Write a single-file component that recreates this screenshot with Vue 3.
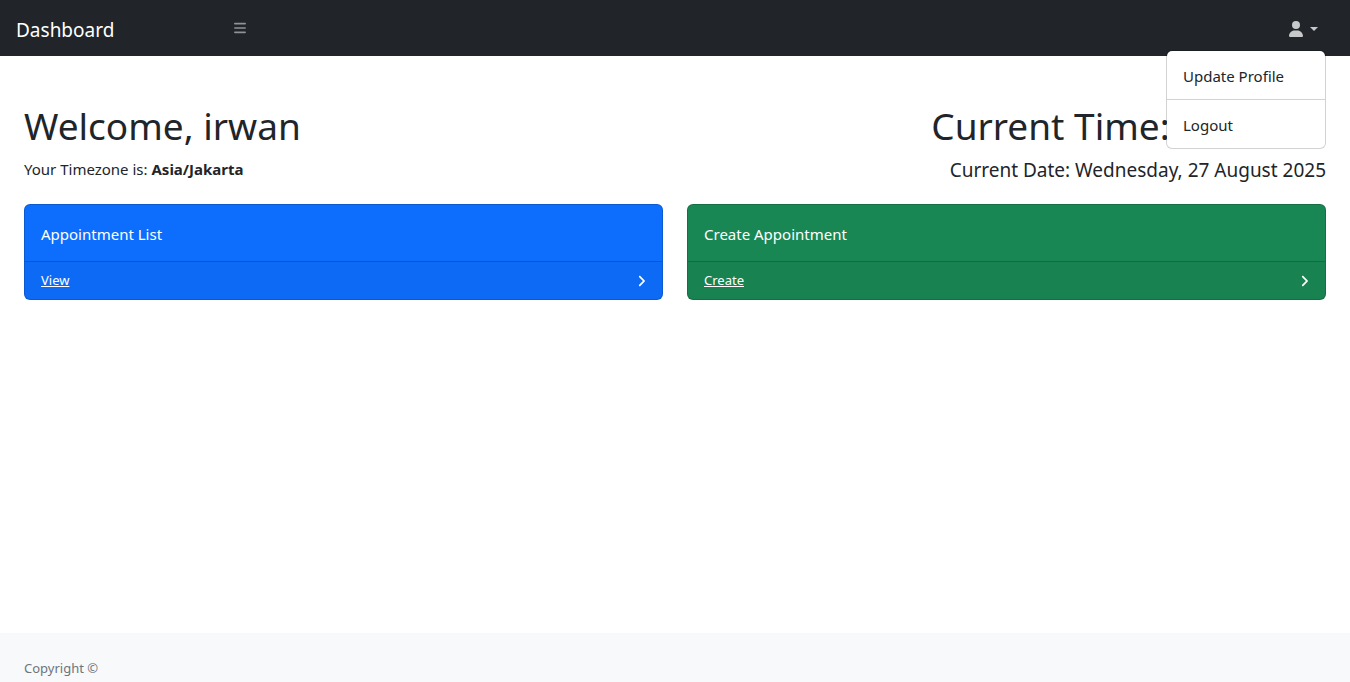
<script setup>
import { ref } from 'vue'

const menuOpen = ref(true)
const time = '10:00:00'
const date = 'Wednesday, 27 August 2025'
const cards = [
  { title: 'Appointment List', action: 'View', tone: 'primary' },
  { title: 'Create Appointment', action: 'Create', tone: 'success' },
]
</script>

<template>
  <div class="page">
    <nav class="topbar">
      <a class="brand" href="#">Dashboard</a>
      <button class="toggle" type="button" aria-label="Toggle sidebar">
        <svg viewBox="0 0 448 512" width="12" height="14" aria-hidden="true">
          <path d="M0 96c0-17.7 14.3-32 32-32h384c17.7 0 32 14.3 32 32s-14.3 32-32 32H32C14.3 128 0 113.7 0 96zM0 256c0-17.7 14.3-32 32-32h384c17.7 0 32 14.3 32 32s-14.3 32-32 32H32c-17.7 0-32-14.3-32-32zM448 416c0 17.7-14.3 32-32 32H32c-17.7 0-32-14.3-32-32s14.3-32 32-32h384c17.7 0 32 14.3 32 32z" />
        </svg>
      </button>
      <div class="user">
        <button
          class="user-button"
          type="button"
          aria-label="Account"
          :aria-expanded="menuOpen"
          @click="menuOpen = !menuOpen"
        >
          <svg viewBox="0 0 448 512" width="14" height="16" aria-hidden="true">
            <path d="M224 256A128 128 0 1 0 224 0a128 128 0 1 0 0 256zm-45.7 48C79.8 304 0 383.8 0 482.300C0 498.700 13.300 512 29.700 512H418.300c16.400 0 29.700-13.300 29.700-29.700C448 383.800 368.200 304 269.700 304H178.300z" />
          </svg>
          <span class="caret"></span>
        </button>
        <div v-if="menuOpen" class="menu">
          <a class="menu-item" href="#">Update Profile</a>
          <hr class="divider" />
          <a class="menu-item" href="#">Logout</a>
        </div>
      </div>
    </nav>

    <main class="content">
      <header class="intro">
        <div>
          <h1 class="title">Welcome, irwan</h1>
          <p class="timezone">Your Timezone is: <strong>Asia/Jakarta</strong></p>
        </div>
        <div class="clock">
          <h1 class="title">Current Time: {{ time }}</h1>
          <p class="date">Current Date: {{ date }}</p>
        </div>
      </header>

      <section class="cards">
        <article v-for="card in cards" :key="card.title" class="card" :class="card.tone">
          <div class="card-body">{{ card.title }}</div>
          <div class="card-footer">
            <a class="card-link" href="#">{{ card.action }}</a>
            <svg viewBox="0 0 320 512" width="9" height="14" aria-hidden="true">
              <path d="M278.6 233.4c12.5 12.5 12.5 32.8 0 45.3l-160 160c-12.5 12.5-32.8 12.5-45.3 0s-12.5-32.8 0-45.3L210.7 256 73.4 118.6c-12.5-12.5-12.5-32.8 0-45.3s32.8-12.5 45.3 0l160 160z" />
            </svg>
          </div>
        </article>
      </section>
    </main>

    <footer class="footer">Copyright ©</footer>
  </div>
</template>

<style>
body {
  margin: 0;
  background: #fff;
}
</style>

<style scoped>
.page {
  box-sizing: border-box;
  display: flex;
  flex-direction: column;
  min-height: 100vh;
  font-family: "Segoe UI", "Noto Sans", "Open Sans", sans-serif;
  font-size: 15px;
  line-height: 24px;
  color: #212529;
}
.page *,
.page *::before {
  box-sizing: border-box;
}
svg {
  display: block;
  fill: currentColor;
}
a {
  color: inherit;
  text-decoration: none;
}
button {
  border: 0;
  background: none;
  font: inherit;
  cursor: pointer;
}
.topbar {
  display: flex;
  align-items: center;
  height: 56px;
  padding-right: 24px;
  background: #212529;
}
.brand {
  width: 226px;
  padding: 4px 16px 0;
  font-size: 19px;
  line-height: 28px;
  color: #fff;
}
.toggle {
  padding: 8px;
  color: rgba(255, 255, 255, 0.5);
}
.user {
  position: relative;
  margin-left: auto;
}
.user-button {
  display: flex;
  align-items: center;
  gap: 7px;
  padding: 14px 8px 12px;
  color: rgba(255, 255, 255, 0.75);
}
.caret {
  border-top: 4px solid currentColor;
  border-right: 4px solid transparent;
  border-left: 4px solid transparent;
}
.menu {
  position: absolute;
  z-index: 10;
  top: 43px;
  right: 0;
  width: 160px;
  padding: 8px 0;
  border: 1px solid rgba(0, 0, 0, 0.175);
  border-radius: 6px;
  background: #fff;
  background-clip: padding-box;
}
.menu-item {
  display: block;
  padding: 5px 16px 3px;
}
.divider {
  height: 1px;
  margin: 8px 0;
  border: 0;
  background: rgba(0, 0, 0, 0.175);
}
.content {
  flex: 1;
  padding: 48px 24px 24px;
}
.intro {
  display: flex;
  justify-content: space-between;
  margin-bottom: 20px;
}
.title {
  margin: 0 0 8px;
  font-size: 37px;
  font-weight: 400;
  line-height: 44px;
}
.timezone {
  margin: 0;
  line-height: 26px;
}
.clock {
  text-align: right;
}
.date {
  margin: 0;
  font-size: 19px;
  line-height: 28px;
}
.cards {
  display: grid;
  grid-template-columns: 1fr 1fr;
  gap: 24px;
}
.card {
  border: 1px solid rgba(0, 0, 0, 0.175);
  border-radius: 6px;
  color: #fff;
}
.primary {
  background: #0d6efd;
}
.success {
  background: #198754;
}
.card-body {
  padding: 17px 16px 15px;
}
.card-footer {
  display: flex;
  align-items: center;
  justify-content: space-between;
  padding: 8px 16px;
  border-top: 1px solid rgba(0, 0, 0, 0.175);
  background: rgba(0, 0, 0, 0.03);
  font-size: 13px;
  line-height: 21px;
}
.card-link {
  text-decoration: underline;
}
.footer {
  padding: 25px 24px 3px;
  background: #f8f9fa;
  font-size: 13px;
  line-height: 21px;
  color: #6c757d;
}
</style>
